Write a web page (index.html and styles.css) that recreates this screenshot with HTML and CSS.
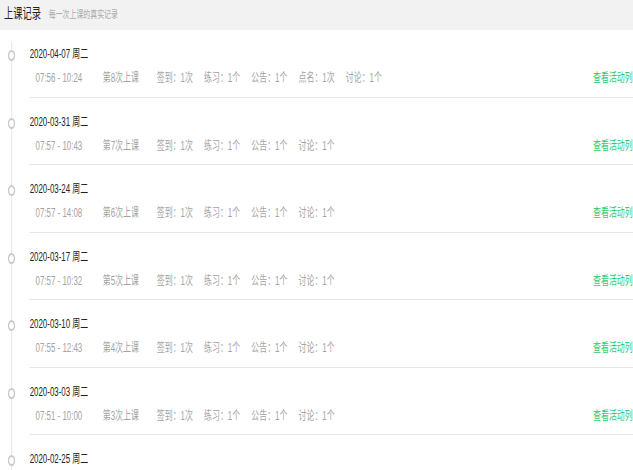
FILE: index.html
```html
<!DOCTYPE html>
<html lang="zh">
<head>
    <meta charset="UTF-8">
    <meta name="viewport" content="width=device-width, initial-scale=1.0">
    <title>上课记录</title>
    <link rel="stylesheet" href="styles.css">
</head>
<body>
    <div class="page">
        <div class="header">
            <h1>上课记录</h1>
            <span class="sub">每一次上课的真实记录</span>
        </div>

        <div class="list">
            <div class="item first">
                <div class="axis"><i class="dot"></i></div>
                <div class="content">
                    <div class="date">2020-04-07 周二</div>
                    <div class="info">
                        <span class="time">07:56 - 10:24</span>
                        <span class="num">第8次上课</span>
                        <span class="stat">签到：1次</span>
                        <span class="stat">练习：1个</span>
                        <span class="stat">公告：1个</span>
                        <span class="stat">点名：1次</span>
                        <span class="stat">讨论：1个</span>
                        <a class="link">查看活动列表</a>
                    </div>
                </div>
            </div>
            <div class="item">
                <div class="axis"><i class="dot"></i></div>
                <div class="content">
                    <div class="date">2020-03-31 周二</div>
                    <div class="info">
                        <span class="time">07:57 - 10:43</span>
                        <span class="num">第7次上课</span>
                        <span class="stat">签到：1次</span>
                        <span class="stat">练习：1个</span>
                        <span class="stat">公告：1个</span>
                        <span class="stat">讨论：1个</span>
                        <a class="link">查看活动列表</a>
                    </div>
                </div>
            </div>
            <div class="item">
                <div class="axis"><i class="dot"></i></div>
                <div class="content">
                    <div class="date">2020-03-24 周二</div>
                    <div class="info">
                        <span class="time">07:57 - 14:08</span>
                        <span class="num">第6次上课</span>
                        <span class="stat">签到：1次</span>
                        <span class="stat">练习：1个</span>
                        <span class="stat">公告：1个</span>
                        <span class="stat">讨论：1个</span>
                        <a class="link">查看活动列表</a>
                    </div>
                </div>
            </div>
            <div class="item">
                <div class="axis"><i class="dot"></i></div>
                <div class="content">
                    <div class="date">2020-03-17 周二</div>
                    <div class="info">
                        <span class="time">07:57 - 10:32</span>
                        <span class="num">第5次上课</span>
                        <span class="stat">签到：1次</span>
                        <span class="stat">练习：1个</span>
                        <span class="stat">公告：1个</span>
                        <span class="stat">讨论：1个</span>
                        <a class="link">查看活动列表</a>
                    </div>
                </div>
            </div>
            <div class="item">
                <div class="axis"><i class="dot"></i></div>
                <div class="content">
                    <div class="date">2020-03-10 周二</div>
                    <div class="info">
                        <span class="time">07:55 - 12:43</span>
                        <span class="num">第4次上课</span>
                        <span class="stat">签到：1次</span>
                        <span class="stat">练习：1个</span>
                        <span class="stat">公告：1个</span>
                        <span class="stat">讨论：1个</span>
                        <a class="link">查看活动列表</a>
                    </div>
                </div>
            </div>
            <div class="item">
                <div class="axis"><i class="dot"></i></div>
                <div class="content">
                    <div class="date">2020-03-03 周二</div>
                    <div class="info">
                        <span class="time">07:51 - 10:00</span>
                        <span class="num">第3次上课</span>
                        <span class="stat">签到：1次</span>
                        <span class="stat">练习：1个</span>
                        <span class="stat">公告：1个</span>
                        <span class="stat">讨论：1个</span>
                        <a class="link">查看活动列表</a>
                    </div>
                </div>
            </div>
            <div class="item">
                <div class="axis"><i class="dot"></i></div>
                <div class="content">
                    <div class="date">2020-02-25 周二</div>
                    <div class="info">
                        <span class="time">07:52 - 10:05</span>
                        <span class="num">第2次上课</span>
                        <span class="stat">签到：1次</span>
                        <span class="stat">练习：1个</span>
                        <span class="stat">讨论：1个</span>
                        <a class="link">查看活动列表</a>
                    </div>
                </div>
            </div>
        </div>
    </div>
</body>
</html>
```

FILE: styles.css
```css
html, body {
    margin: 0;
    padding: 0;
    overflow: hidden;
    background: #fff;
}
body {
    font-family: "Liberation Sans", "Noto Sans CJK SC", sans-serif;
    color: #333;
    height: 470px;
}
/* the page was laid out at ~960px and shown squeezed into the window */
.page {
    width: 972px;
    transform: scaleX(0.659);
    transform-origin: 0 0;
}
.header {
    display: flex;
    align-items: baseline;
    height: 30px;
    box-sizing: border-box;
    padding: 4px 0 0 6px;
    background: #f2f2f2;
}
.header h1 {
    margin: 0;
    font-size: 14px;
    font-weight: normal;
    line-height: 18px;
    color: #222;
}
.sub {
    margin-left: 12px;
    font-size: 10.5px;
    color: #aaa;
}
.item {
    display: flex;
}
.axis {
    width: 45px;
    flex-shrink: 0;
    background: linear-gradient(#e6e6e6, #e6e6e6) no-repeat 17px 0 / 1.5px 100%;
}
.item.first .axis {
    background-position: 17px 12px;
}
.dot {
    display: block;
    width: 7px;
    height: 7px;
    margin: 20px 0 0 12px;
    border: 2px solid #c9c9c9;
    border-radius: 50%;
    background: #fff;
}
.content {
    flex: 1;
    padding: 14px 0 8.5px;
    border-bottom: 1px solid #e6e6e6;
}
.date {
    font-size: 12px;
    line-height: 20px;
    color: #222;
}
.info {
    display: flex;
    margin-top: 4px;
    padding-left: 9px;
    font-size: 12px;
    line-height: 20px;
    color: #a3a3a3;
}
.time {
    width: 102px;
}
.num {
    width: 82px;
}
.stat {
    margin-right: 17px;
}
.link {
    margin-left: auto;
    color: #2ecc71;
    cursor: pointer;
}
```
